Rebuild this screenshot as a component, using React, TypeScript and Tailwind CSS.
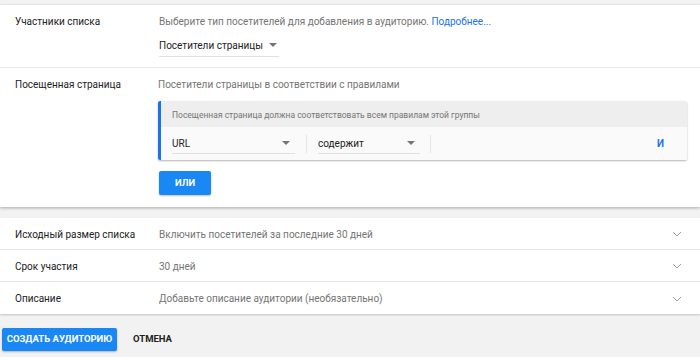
import React from "react";

const font = { fontFamily: "Roboto, 'Noto Sans', Arial, sans-serif" };

function Caret({ className = "" }: { className?: string }) {
  return (
    <svg width="8" height="4" viewBox="0 0 8 4" className={className}>
      <path d="M0 0h8L4 4z" fill="#757575" />
    </svg>
  );
}

function Chevron() {
  return (
    <svg width="10" height="6" viewBox="0 0 10 6" className="mr-[18px]">
      <path d="M1 1l4 4 4-4" fill="none" stroke="#9e9e9e" strokeWidth="1" />
    </svg>
  );
}

function CollapsedRow({ label, value, last }: { label: string; value: string; last?: boolean }) {
  return (
    <div className={`flex h-[32px] items-center pt-px ${last ? "" : "border-b border-[#e6e6e6]"}`}>
      <div className="w-[159px] pl-[15px] text-[10px] text-[#212121]">{label}</div>
      <div className="flex-1 text-[10px] text-[#757575]">{value}</div>
      <Chevron />
    </div>
  );
}

export default function App() {
  return (
    <div className="h-[357px] w-[700px] overflow-hidden bg-[#f2f2f2] pt-[5px]" style={font}>
      {/* main card */}
      <div className="bg-white shadow-[0_1px_3px_rgba(0,0,0,0.3)]">
        <div className="flex h-[63px] border-b border-[#ebebeb] pt-[10px]">
          <div className="w-[159px] pl-[15px] text-[10px] leading-[14px] text-[#212121]">Участники списка</div>
          <div className="flex-1">
            <div className="text-[10px] leading-[14px] text-[#757575]">
              Выберите тип посетителей для добавления в аудиторию.{" "}
              <span className="text-[#1a73e8]">Подробнее...</span>
            </div>
            <div className="mt-[7px] flex h-[21px] w-[120px] items-center gap-[6px] whitespace-nowrap border-b border-[#e0e0e0] pb-[2px] text-[10px] text-[#212121]">
              Посетители страницы
              <Caret />
            </div>
          </div>
        </div>

        <div className="flex pb-[12px] pt-[10px]">
          <div className="w-[158px] pl-[15px] text-[10px] leading-[14px] text-[#212121]">Посещенная страница</div>
          <div className="flex-1 pr-[13px]">
            <div className="text-[10px] leading-[14px] text-[#757575]">Посетители страницы в соответствии с правилами</div>
            <div className="mt-[9px] overflow-hidden rounded-[2px] border-l-[3px] border-[#1a73e8] shadow-[0_1px_2px_rgba(0,0,0,0.3)]">
              <div className="flex h-[26px] items-center whitespace-nowrap bg-[#eeeeee] pl-[11px] pt-[2px] text-[8.5px] text-[#757575]">
                Посещенная страница должна соответствовать всем правилам этой группы
              </div>
              <div className="flex h-[33px] items-center bg-[#fafafa] pl-[11px] pr-[23px]">
                <div className="flex h-[20px] w-[123px] items-center justify-between border-b border-[#e0e0e0] pr-[5px] text-[10px] text-[#212121]">
                  URL
                  <Caret />
                </div>
                <div className="mx-[11px] h-[18px] w-px bg-[#e6e6e6]" />
                <div className="flex h-[20px] w-[102px] items-center justify-between border-b border-[#e0e0e0] pr-[5px] text-[10px] text-[#212121]">
                  содержит
                  <Caret />
                </div>
                <div className="ml-[10px] h-[18px] w-px bg-[#e6e6e6]" />
                <div className="flex-1" />
                <div className="text-[10px] font-bold text-[#1a73e8]">И</div>
              </div>
            </div>
            <button className="ml-px mt-[11px] h-[24px] w-[52px] rounded-[2px] bg-[#1a88f4] text-[9.5px] font-bold text-white shadow-[0_1px_2px_rgba(0,0,0,0.25)]">
              ИЛИ
            </button>
          </div>
        </div>
      </div>

      {/* collapsed card */}
      <div className="mt-[11px] bg-white shadow-[0_1px_2px_rgba(0,0,0,0.2)]">
        <CollapsedRow label="Исходный размер списка" value="Включить посетителей за последние 30 дней" />
        <CollapsedRow label="Срок участия" value="30 дней" />
        <CollapsedRow label="Описание" value="Добавьте описание аудитории (необязательно)" last />
      </div>

      <div className="mt-[14px] flex items-center pl-[2px]">
        <button className="h-[23px] w-[115px] rounded-[2px] bg-[#1a88f4] text-[9.5px] font-bold text-white shadow-[0_1px_2px_rgba(0,0,0,0.25)]">
          СОЗДАТЬ АУДИТОРИЮ
        </button>
        <span className="ml-[16px] text-[9.5px] font-bold text-[#212121]">ОТМЕНА</span>
      </div>
    </div>
  );
}
